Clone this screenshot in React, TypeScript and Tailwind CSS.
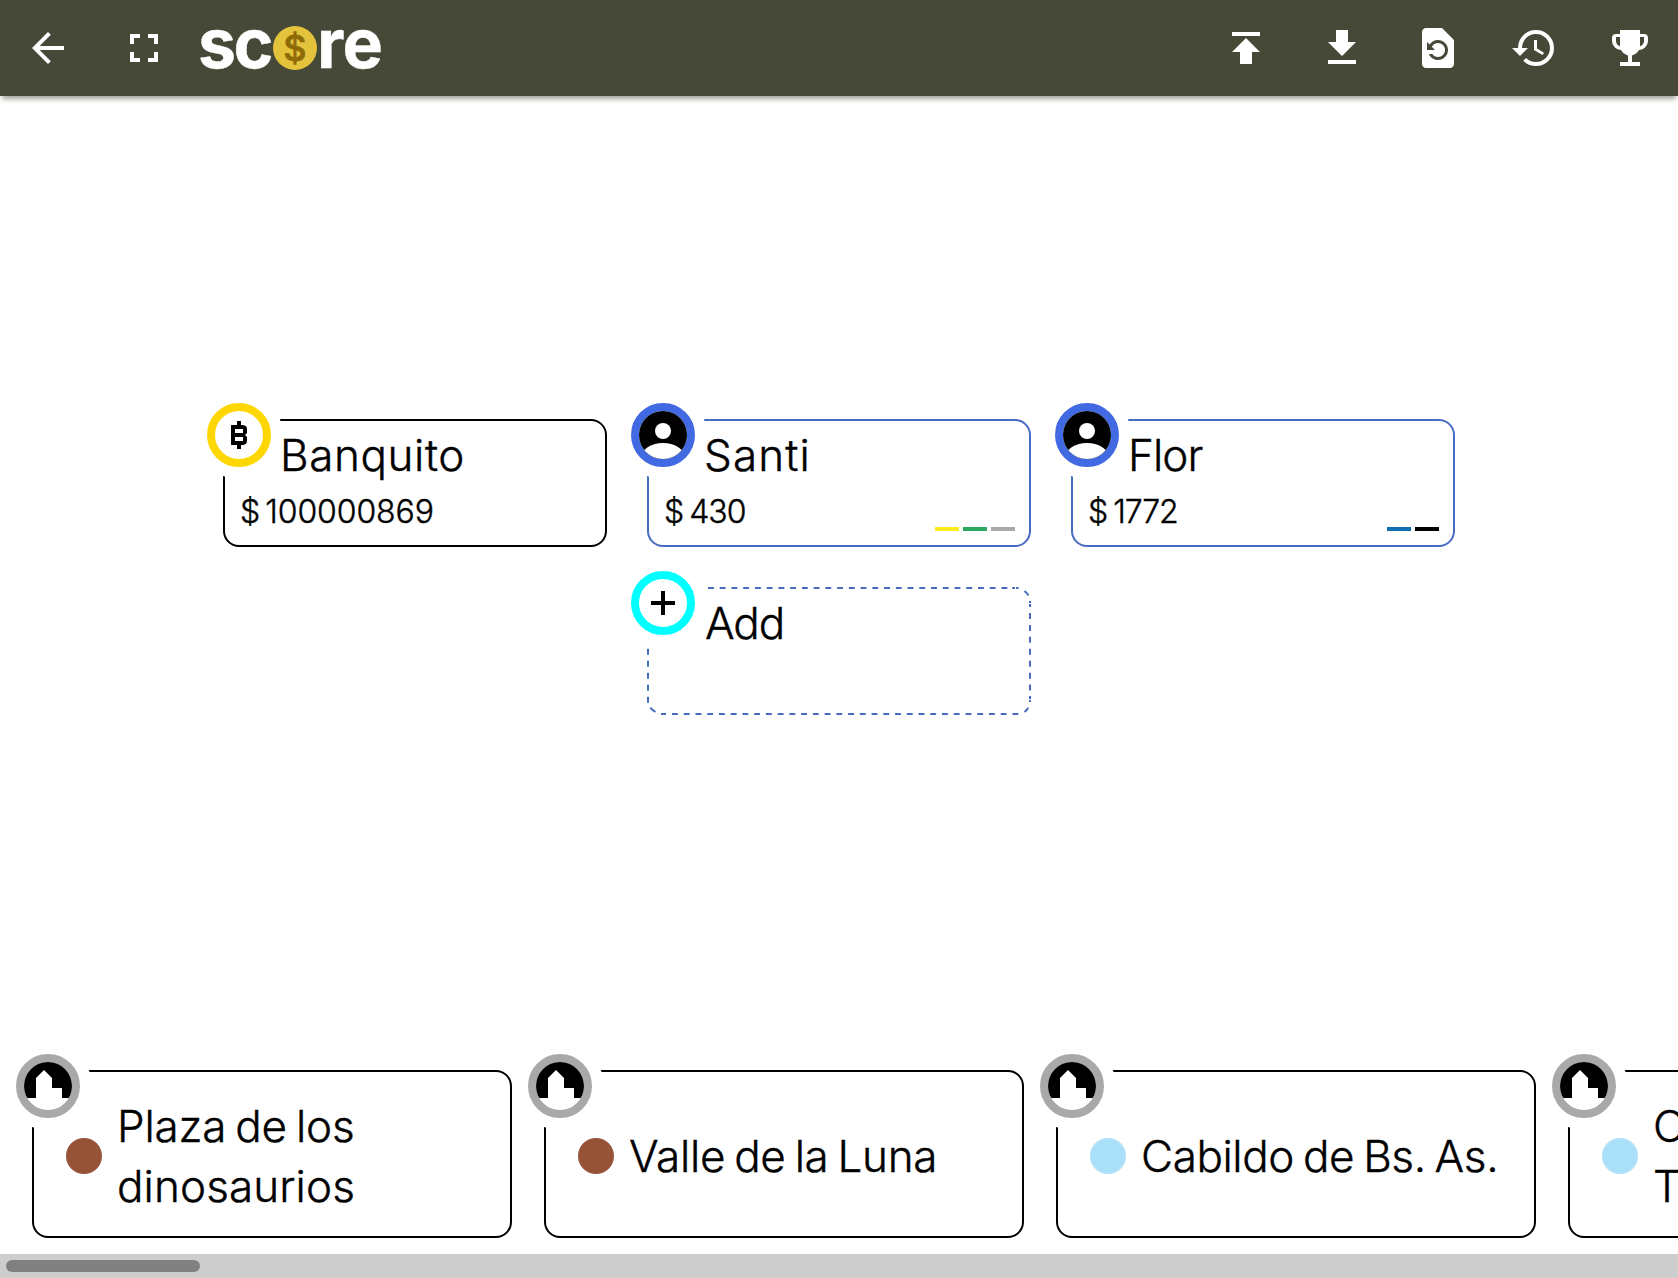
import React from "react";
import { MdArrowBack, MdFullscreen, MdPublish, MdRestorePage, MdHistory } from "react-icons/md";

function Action({ children }: { children: React.ReactNode }) {
  return <button className="flex size-24 items-center justify-center text-white">{children}</button>;
}

function Avatar({ ring, children }: { ring: string; children: React.ReactNode }) {
  return (
    <div className={`absolute -left-[18px] -top-[18px] size-16 overflow-hidden rounded-full border-8 bg-white shadow-[0_0_0_12px_#fff] ${ring}`}>
      <svg viewBox="0 0 24 24" className="size-12">{children}</svg>
    </div>
  );
}

const PERSON = (
  <>
    <rect width="24" height="24" fill="#000" />
    <circle cx="12" cy="10" r="4" fill="#fff" />
    <ellipse cx="12" cy="24.6" rx="11.6" ry="8.6" fill="#fff" />
  </>
);

const HOUSE = (
  <>
    <rect width="24" height="18" fill="#000" />
    <path d="M6 18V8l4-4 4 4v5h5v5z" fill="#fff" />
  </>
);

const BITCOIN = (
  <path
    fill="#000"
    fillRule="evenodd"
    d="M11 5h2v2h1q2 .2 2 2v2l-1 1 1 1v2q0 1.800-2 2h-1v2h-2v-2H8V7h3zM10 9v2h4V9zm0 4v2h4v-2z"
  />
);

function DashedFrame() {
  return (
    <svg viewBox="0 0 384 128" className="absolute -left-0.5 -top-0.5 h-32 w-96" fill="none" stroke="#486bc2" strokeWidth="2">
      <path d="M61 1H361" strokeDasharray="5.87 5.87" />
      <path d="M365.300 1h2.700M369 1h2.500M377.500 4q2.500 2 4 4.500M383 14v2M383 17v3" />
      <path d="M383 26V105" strokeDasharray="6 5.930" />
      <path d="M383 109v3M383 113v2M381.300 120.700q-1.500 2.500-3.800 4.300M3.300 120.700q2 2.500 5.200 4.300M14 127h5" />
      <path d="M25 127H372" strokeDasharray="5.870 5.870" />
      <path d="M1 61.700V116" strokeDasharray="6 6" />
    </svg>
  );
}

type PlayerProps = {
  name: string;
  nameClass: string;
  amount?: string;
  amountClass?: string;
  frame: string;
  ring: string;
  icon: React.ReactNode;
  bars?: string[];
  dashed?: boolean;
};

function Player({ name, nameClass, amount, amountClass, frame, ring, icon, bars = [], dashed }: PlayerProps) {
  return (
    <div className={`relative h-32 w-96 rounded-2xl border-2 ${frame}`}>
      {dashed && <DashedFrame />}
      <Avatar ring={ring}>{icon}</Avatar>
      <div className={`relative pt-1 text-[44px] leading-[60px] ${nameClass}`}>{name}</div>
      {amount && (
        <div className="mt-[5px] flex gap-[5px] pl-[15px] text-[32px] leading-[44px]">
          <span>$</span>
          <span className={amountClass}>{amount}</span>
        </div>
      )}
      <div className="absolute bottom-[14px] right-[14px] flex gap-1">
        {bars.map((c) => (
          <div key={c} className={`h-1 w-6 ${c}`} />
        ))}
      </div>
    </div>
  );
}

function Property({ lines, dot }: { lines: [string, string][]; dot: string }) {
  return (
    <div className="relative flex h-[168px] w-[480px] shrink-0 items-center gap-[15px] rounded-2xl border-2 border-black pl-8 pt-1">
      <Avatar ring="border-[#a9a9a9]">{HOUSE}</Avatar>
      <div className={`size-9 shrink-0 rounded-full ${dot}`} />
      <div className="whitespace-nowrap text-[44px] leading-[60px] [word-spacing:-3px]">
        {lines.map(([text, track]) => (
          <div key={text} className={track}>{text}</div>
        ))}
      </div>
    </div>
  );
}

export default function App() {
  return (
    <div className="flex h-[1278px] w-full flex-col overflow-hidden bg-white font-['Inter',sans-serif] font-light text-black [-webkit-text-stroke:0.4px]">
      <header className="flex h-24 shrink-0 items-center bg-[#464838] shadow-[0_5px_5px_-2px_rgba(70,72,56,0.5)]">
        <Action><MdArrowBack className="size-12" /></Action>
        <Action><MdFullscreen className="size-12" /></Action>
        <div className="ml-[6px] flex h-24 items-center text-[68px] font-bold leading-none text-white">
          <span className="-mt-[11px] w-[75px] tracking-[-2.500px]">sc</span>
          <span className="flex size-11 shrink-0 items-center justify-center rounded-full bg-[#e3c33c] text-[36px] font-medium text-[#8f6b08] [-webkit-text-stroke:0.8px]">$</span>
          <span className="-mt-[11px] tracking-[-0.500px]">re</span>
        </div>
        <div className="ml-auto flex">
          <Action><MdPublish className="size-12" /></Action>
          <Action>
            <svg viewBox="0 0 24 24" className="size-12" fill="currentColor"><path d="M19 9h-4V3H9v6H5l7 7 7-7zM5 18v2h14v-2H5z" /></svg>
          </Action>
          <Action><MdRestorePage className="size-12" /></Action>
          <Action><MdHistory className="size-12" /></Action>
          <Action>
            <svg viewBox="0 0 24 24" className="size-12" fill="currentColor">
              <path fillRule="evenodd" d="M7 3h10v2h2a2 2 0 0 1 2 2v1.500a4.500 4.500 0 0 1-4.500 4.500c-.8 1.400-2 2.300-3.500 2.700V19h4v2H7v-2h4v-3.300C9.500 15.300 8.300 14.400 7.500 13A4.500 4.500 0 0 1 3 8.500V7a2 2 0 0 1 2-2h2zM5 6.500v2c0 1.200.8 2.200 2 2.600V6.500zm12 0v4.600c1.200-.4 2-1.400 2-2.600v-2z" />
            </svg>
          </Action>
        </div>
      </header>

      <main className="flex grow flex-col items-center justify-center gap-10">
        <div className="flex gap-10">
          <Player name="Banquito" nameClass="pl-[55px] tracking-[0.6px]" amount="100000869" amountClass="tracking-[-0.1px]" frame="border-black" ring="border-[#ffd700]" icon={BITCOIN} />
          <Player name="Santi" nameClass="pl-[55px] tracking-[1.100px]" amount="430" amountClass="tracking-[-1px]" frame="border-[#486bc2]" ring="border-[#4169e1]" icon={PERSON} bars={["bg-[#fbed1c]", "bg-[#2ca75e]", "bg-[#a9a9a9]"]} />
          <Player name="Flor" nameClass="pl-[55px] tracking-[-0.9px]" amount="1772" amountClass="tracking-[-1.100px]" frame="border-[#486bc2]" ring="border-[#4169e1]" icon={PERSON} bars={["bg-[#0f6fb1]", "bg-black"]} />
        </div>
        <Player name="Add" nameClass="pl-[56px] tracking-[-1.100px]" frame="border-transparent" dashed ring="border-[#00ffff]" icon={<path d="M11 6h2v5h5v2h-5v5h-2v-5H6v-2h5z" />} />
      </main>

      <section className="flex shrink-0 gap-8 overflow-hidden px-8 pb-4 pt-8">
        <Property lines={[["Plaza de los", "tracking-[-0.2px]"], ["dinosaurios", "tracking-[0.1px]"]]} dot="bg-[#955436]" />
        <Property lines={[["Valle de la Luna", "tracking-[-0.3px]"]]} dot="bg-[#955436]" />
        <Property lines={[["Cabildo de Bs. As.", "tracking-[-0.4px]"]]} dot="bg-[#aae0fa]" />
        <Property lines={[["Casa de", "tracking-[-0.2px]"], ["Tucumán", "tracking-[-0.2px]"]]} dot="bg-[#aae0fa]" />
      </section>
      <div className="flex h-6 shrink-0 items-center bg-[#cdcdcd] pl-1.5">
        <div className="h-3 w-[194px] rounded-full bg-[#7f807f]" />
      </div>
    </div>
  );
}
